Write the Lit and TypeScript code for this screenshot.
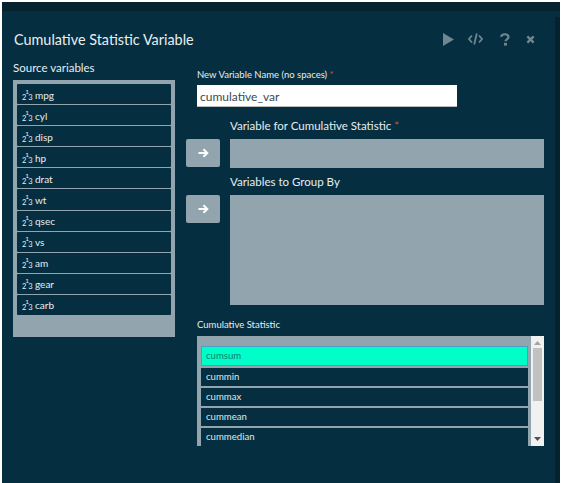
import { LitElement, html, css } from "lit";
import { customElement } from "lit/decorators.js";

const VARS = ["mpg", "cyl", "disp", "hp", "drat", "wt", "qsec", "vs", "am", "gear", "carb"];
const STATS = ["cumsum", "cummin", "cummax", "cummean", "cummedian"];

const arrow = html`<svg class="arrow" viewBox="0 0 12 12" width="12" height="12">
  <path d="M1.5 6H10M6.5 2.2 10.3 6 6.5 9.8" fill="none" stroke="#fff" stroke-width="2"/>
</svg>`;

@customElement("app-root")
export class AppRoot extends LitElement {
  static styles = css`
    :host { display: block; width: 562px; height: 483px; background: #fff; overflow: hidden;
      font-family: Lato, "Open Sans", sans-serif; color: #e6edf0; }
    .frame { box-sizing: border-box; height: 481px; margin: 2px 0 0 2px; width: 558px; padding-top: 9px;
      background: linear-gradient(#052f40, #052f40) no-repeat 0 9px / 100% 6px, #06222e; }
    .panel { box-sizing: border-box; width: 553px; height: 472px; background: #052f40; padding: 0 0 0 11px; }
    .head { display: flex; align-items: center; height: 41px; padding-top: 6px; box-sizing: border-box; }
    .title { font-size: 14.4px; color: #e8eef0; flex: 1; padding-left: 1px; padding-top: 10px; }
    .icons { display: flex; align-items: center; padding: 9px 20px 0 0; }
    .i1 { margin-right: 14px; }
    .i2 { margin-right: 17px; }
    .i3 { margin-right: 16px; }
    .body { display: flex; }
    .left { width: 162px; flex: none; }
    .src { font-size: 11.5px; height: 20px; line-height: 16px; padding-top: 8px; }
    .srcbox { box-sizing: border-box; width: 162px; height: 257px; background: #92a5ae; padding: 4px; display: flex; flex-direction: column; gap: 1px; }
    .row { height: 20.1px; flex: none; box-sizing: border-box; background: #052f40; border-radius: 1px; font-size: 10px; color: #e8eef0; display: flex; align-items: center; padding: 1px 0 0 5px; gap: 3px; }
    .ni { font-size: 7.5px; line-height: 8px; padding-top: 4px; width: 10px; white-space: nowrap; }
    sup { font-size: 6.5px; line-height: 0; vertical-align: 6px; margin: 0 -1px; }
    .right { flex: 1; padding: 15px 0 0 11px; display: flex; flex-direction: column; }
    .lab-s { font-size: 9.5px; line-height: 12px; margin-top: 2px; padding-left: 11px; }
    .req { color: #c5533a; }
    .input { box-sizing: border-box; margin: 4px 0 0 11px; width: 260px; height: 22px; background: #fff; color: #3a4a50; font-size: 12px; line-height: 20px; padding: 2px 0 0 3px; border-bottom: 1px solid #bbb; }
    .lab-m { font-size: 11.5px; line-height: 14px; padding-left: 44px; }
    .lm1 { margin-top: 12px; }
    .lm2 { margin-top: 7px; }
    .pair { display: flex; gap: 10px; margin-top: 6px; }
    .btn { width: 34px; height: 28px; flex: none; background: #92a5ae; border-radius: 2px; display: flex; align-items: center; justify-content: center; }
    .drop { width: 314px; background: #92a5ae; }
    .d1 { height: 29px; }
    .d2 { height: 110px; }
    .ls { margin-top: 13px; line-height: 14px; }
    .list { box-sizing: border-box; margin: 4px 0 0 11px; width: 347px; height: 110px; background: #92a5ae; display: flex; }
    .opts { flex: 1; padding: 10px 3px 0 4px; display: flex; flex-direction: column; gap: 1.5px; }
    .opt { height: 18.5px; background: #052f40; font-size: 9.6px; line-height: 17px; padding-left: 5px; color: #dfe8eb; }
    .opt.sel { height: 20px; line-height: 20px; background: #00ffc8; color: #0b7f6c; box-shadow: inset 0 0 0 1px #4a9fc4; }
    .bar { width: 13px; background: #f1f1f1; display: flex; flex-direction: column; align-items: center; }
    .bar svg { flex: none; margin-top: 5px; }
    .thumb { width: 9px; height: 53px; background: #c1c1c1; margin-top: 3px; }
    .sp { flex: 1; }
    .bar svg.dn { margin: 0 0 5px; }
  `;

  render() {
    return html`<div class="frame"><div class="panel">
      <div class="head">
        <div class="title">Cumulative Statistic Variable</div>
        <div class="icons">
          <svg class="i1" width="11" height="13" viewBox="0 0 12 14"><path d="M0 0 12 7 0 14Z" fill="#6f8792"/></svg>
          <svg class="i2" width="15" height="12" viewBox="0 0 15 12"><path d="M4 2.500.9 6 4 9.500M11 2.500 14.100 6 11 9.500M8.800.5 6.200 11.500" fill="none" stroke="#6f8792" stroke-width="1.800"/></svg>
          <svg class="i3" width="10" height="13" viewBox="0 0 11 14"><path d="M1.300 4.200C1.500 2.200 3.200 1.200 5.300 1.200 7.600 1.200 9.300 2.500 9.300 4.400 9.300 6.800 6 6.800 6 9" fill="none" stroke="#6f8792" stroke-width="2.400"/><rect x="4.400" y="10.700" width="3.200" height="3" fill="#6f8792"/></svg>
          <svg width="9" height="9" viewBox="0 0 10 10"><path d="M1.500 1.500 8.500 8.500M8.500 1.500 1.500 8.500" fill="none" stroke="#6f8792" stroke-width="2.600"/></svg>
        </div>
      </div>
      <div class="body">
        <div class="left">
          <div class="src">Source variables</div>
          <div class="srcbox">
            ${VARS.map((v) => html`<div class="row"><span class="ni">2<sup>1</sup>3</span>${v}</div>`)}
          </div>
        </div>
        <div class="right">
          <div class="lab-s">New Variable Name (no spaces) <span class="req">*</span></div>
          <div class="input">cumulative_var</div>
          <div class="lab-m lm1">Variable for Cumulative Statistic <span class="req">*</span></div>
          <div class="pair"><div class="btn">${arrow}</div><div class="drop d1"></div></div>
          <div class="lab-m lm2">Variables to Group By</div>
          <div class="pair"><div class="btn">${arrow}</div><div class="drop d2"></div></div>
          <div class="lab-s ls">Cumulative Statistic</div>
          <div class="list">
            <div class="opts">
              ${STATS.map((s, i) => html`<div class="opt ${i === 0 ? "sel" : ""}">${s}</div>`)}
            </div>
            <div class="bar">
              <svg width="7" height="4" viewBox="0 0 7 4"><path d="M3.500 0 7 4H0Z" fill="#a3a3a3"/></svg>
              <div class="thumb"></div>
              <div class="sp"></div>
              <svg class="dn" width="7" height="4" viewBox="0 0 7 4"><path d="M0 0H7L3.500 4Z" fill="#505050"/></svg>
            </div>
          </div>
        </div>
      </div>
    </div></div>`;
  }
}
